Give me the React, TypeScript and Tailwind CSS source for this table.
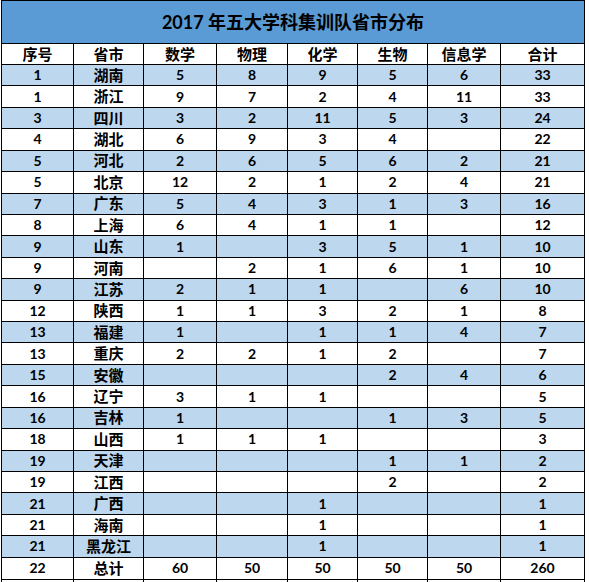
import React from "react";

const header = ["序号", "省市", "数学", "物理", "化学", "生物", "信息学", "合计"];

const rows: string[][] = [
  ["1", "湖南", "5", "8", "9", "5", "6", "33"],
  ["1", "浙江", "9", "7", "2", "4", "11", "33"],
  ["3", "四川", "3", "2", "11", "5", "3", "24"],
  ["4", "湖北", "6", "9", "3", "4", "", "22"],
  ["5", "河北", "2", "6", "5", "6", "2", "21"],
  ["5", "北京", "12", "2", "1", "2", "4", "21"],
  ["7", "广东", "5", "4", "3", "1", "3", "16"],
  ["8", "上海", "6", "4", "1", "1", "", "12"],
  ["9", "山东", "1", "", "3", "5", "1", "10"],
  ["9", "河南", "", "2", "1", "6", "1", "10"],
  ["9", "江苏", "2", "1", "1", "", "6", "10"],
  ["12", "陕西", "1", "1", "3", "2", "1", "8"],
  ["13", "福建", "1", "", "1", "1", "4", "7"],
  ["13", "重庆", "2", "2", "1", "2", "", "7"],
  ["15", "安徽", "", "", "", "2", "4", "6"],
  ["16", "辽宁", "3", "1", "1", "", "", "5"],
  ["16", "吉林", "1", "", "", "1", "3", "5"],
  ["18", "山西", "1", "1", "1", "", "", "3"],
  ["19", "天津", "", "", "", "1", "1", "2"],
  ["19", "江西", "", "", "", "2", "", "2"],
  ["21", "广西", "", "", "1", "", "", "1"],
  ["21", "海南", "", "", "1", "", "", "1"],
  ["21", "黑龙江", "", "", "1", "", "", "1"],
];

const total = ["22", "总计", "60", "50", "50", "50", "50", "260"];

export default function App() {
  return (
    <div
      className="w-[589px] h-[582px] bg-white overflow-hidden text-black"
      style={{ fontFamily: 'Lato, "Noto Sans CJK SC", sans-serif' }}
    >
      <div className="ml-[1px] w-[584px] grid grid-cols-[72px_70px_73px_71px_70px_70px_73px_84px] border-l border-t border-black">
        <div className="col-span-8 h-[43px] bg-[#5b9bd5] border-r border-b border-black flex items-center justify-center text-[18px] font-bold">
          2017 年五大学科集训队省市分布
        </div>
        {header.map((h, i) => (
          <div
            key={"h" + i}
            className="h-[21px] border-r border-b border-black flex items-center justify-center text-[15px] font-bold leading-none"
          >
            {h}
          </div>
        ))}
        {rows.map((r, ri) =>
          r.map((c, ci) => (
            <div
              key={ri + "-" + ci}
              className={
                "h-[21.43px] border-r border-b border-black flex items-center justify-center font-bold leading-none " +
                (ci === 1 ? "text-[15px] " : "text-[14px] ") +
                (ri % 2 === 0 ? "bg-[#bdd7ee]" : "bg-white")
              }
            >
              {c}
            </div>
          ))
        )}
        {total.map((c, ci) => (
          <div
            key={"t" + ci}
            className={
              "h-[22px] border-r border-b border-black flex items-center justify-center font-bold leading-none bg-white " +
              (ci === 1 ? "text-[15px]" : "text-[14px]")
            }
          >
            {c}
          </div>
        ))}
        {total.map((_, ci) => (
          <div key={"e" + ci} className="h-[4px] border-r border-black" />
        ))}
      </div>
    </div>
  );
}
